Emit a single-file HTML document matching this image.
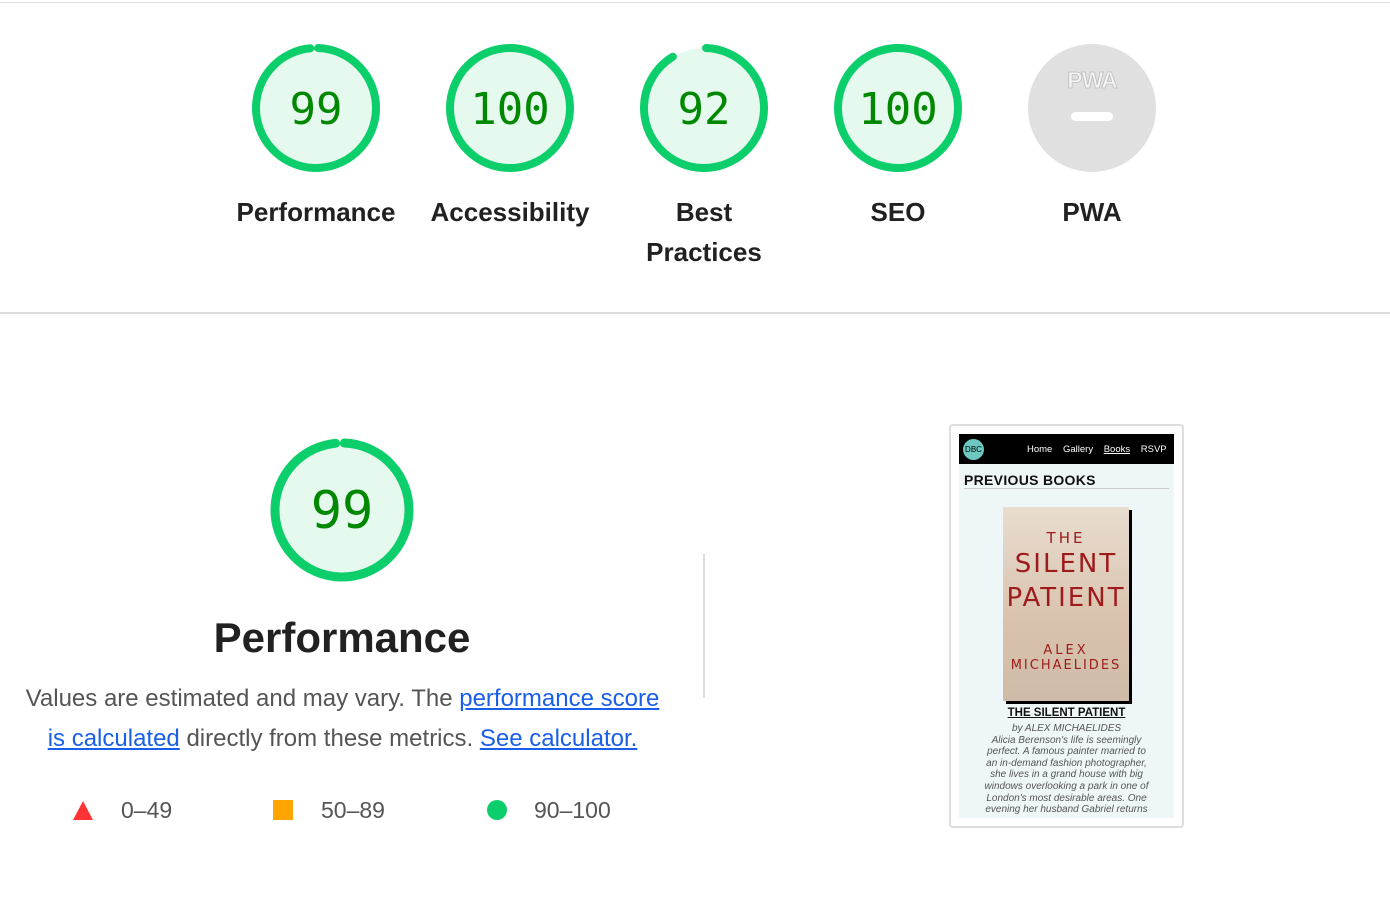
<!DOCTYPE html><html><head><style>
body{margin:0;width:1390px;height:906px;background:#fff;font-family:"Liberation Sans",sans-serif;position:relative;overflow:hidden}
.a{position:absolute}
.lbl{position:absolute;width:200px;text-align:center;font-size:26px;font-weight:bold;color:#212121;line-height:40px}
a{color:#1a5fe8;text-decoration:underline}
</style></head><body>
<div class="a" style="left:0;top:2px;width:1390px;height:1px;background:#ddd"></div>
<div class="a" style="left:0;top:312px;width:1390px;height:2px;background:#ddd"></div>
<svg class="a" style="left:0;top:0" width="1390" height="320">
<g fill="#e5f9ef" stroke="#0cce6b" stroke-width="8" stroke-linecap="round">
<circle cx="316" cy="108" r="60" stroke-dasharray="369 377" transform="rotate(-88 316 108)"/>
<circle cx="510" cy="108" r="60"/>
<circle cx="704" cy="108" r="60" stroke-dasharray="342 377" transform="rotate(-88 704 108)"/>
<circle cx="898" cy="108" r="60"/>
</g>
<circle cx="1092" cy="108" r="64" fill="#e0e0e0"/>
<rect x="1071" y="112" width="42" height="9" rx="4.5" fill="#fff"/>
<text x="1092" y="88" text-anchor="middle" font-family="Liberation Sans" font-weight="bold" font-size="23" fill="#f4f4f4" stroke="#bbb" stroke-width="0.8" letter-spacing="-1">PWA</text>
<g font-family="DejaVu Sans Mono" font-size="44" fill="#008800" text-anchor="middle">
<text x="316" y="124">99</text><text x="510" y="124">100</text><text x="704" y="124">92</text><text x="898" y="124">100</text>
</g>
</svg>
<div class="lbl" style="left:216px;top:192px">Performance</div>
<div class="lbl" style="left:410px;top:192px">Accessibility</div>
<div class="lbl" style="left:604px;top:192px">Best<br>Practices</div>
<div class="lbl" style="left:798px;top:192px">SEO</div>
<div class="lbl" style="left:992px;top:192px">PWA</div>
<svg class="a" style="left:260px;top:430px" width="170" height="170">
<circle cx="82" cy="80" r="67" fill="#e5f9ef" stroke="#0cce6b" stroke-width="9" stroke-dasharray="412 421" transform="rotate(-88 82 80)" stroke-linecap="round"/>
<text x="82" y="98" text-anchor="middle" font-family="DejaVu Sans Mono" font-size="52" fill="#008800">99</text>
</svg>
<div class="a" style="left:92px;top:610px;width:500px;text-align:center;font-size:42px;font-weight:bold;color:#212121;line-height:56px">Performance</div>
<div class="a" style="left:20px;top:679px;width:645px;text-align:center;font-size:24px;line-height:40px;color:#555">Values are estimated and may vary. The <a>performance score is calculated</a> directly from these metrics. <a>See calculator.</a></div>
<svg class="a" style="left:72px;top:800px" width="22" height="22"><polygon points="11,1 21,20 1,20" fill="#f33"/></svg>
<div class="a" style="left:121px;top:797px;font-size:23px;color:#555">0–49</div>
<div class="a" style="left:273px;top:800px;width:20px;height:20px;background:#ffa400"></div>
<div class="a" style="left:321px;top:797px;font-size:23px;color:#555">50–89</div>
<div class="a" style="left:487px;top:800px;width:20px;height:20px;border-radius:50%;background:#0cce6b"></div>
<div class="a" style="left:534px;top:797px;font-size:23px;color:#555">90–100</div>
<div class="a" style="left:703px;top:554px;width:2px;height:144px;background:#ddd"></div>
<div class="a" style="left:949px;top:424px;width:231px;height:400px;border:2px solid #ddd;border-radius:4px;background:#fff"></div>
<div class="a" style="left:959px;top:434px;width:215px;height:384px;background:#eef6f8;overflow:hidden">
<div style="height:30px;background:#000;position:relative">
<div class="a" style="left:4px;top:5px;width:21px;height:21px;border-radius:50%;background:#6cc8c0;font-size:8px;line-height:21px;text-align:center">DBC</div>
<div class="a" style="left:68px;top:10px;font-size:9.5px;color:#fff;word-spacing:8px">Home Gallery <u>Books</u> RSVP</div>
</div>
<div style="margin:8px 5px 0;border-bottom:1px solid #ccc;font-size:14px;font-weight:bold;letter-spacing:.3px;color:#111">PREVIOUS BOOKS</div>
<div class="a" style="left:47px;top:76px;width:126px;height:194px;background:#000"></div>
<div class="a" style="left:44px;top:73px;width:126px;height:194px;background:linear-gradient(#e8ddd0,#d9c2ad 60%,#cdbca8);color:#9e1b1b;text-align:center;font-family:'DejaVu Sans',sans-serif">
<div style="font-size:15px;margin-top:22px;letter-spacing:3px">THE</div>
<div style="font-size:26px;letter-spacing:2px;line-height:34px">SILENT<br>PATIENT</div>
<div style="font-size:13px;margin-top:28px;letter-spacing:3px">ALEX</div>
<div style="font-size:13px;letter-spacing:2px">MICHAELIDES</div></div>
<div class="a" style="left:0;top:273px;width:215px;text-align:center;font-size:11.5px;font-weight:bold;color:#111"><u>THE SILENT PATIENT</u></div>
<div class="a" style="left:0;top:289px;width:215px;text-align:center;font-size:10px;font-style:italic;color:#555;line-height:11.6px">by ALEX MICHAELIDES<br>Alicia Berenson's life is seemingly<br>perfect. A famous painter married to<br>an in-demand fashion photographer,<br>she lives in a grand house with big<br>windows overlooking a park in one of<br>London's most desirable areas. One<br>evening her husband Gabriel returns</div>
</div>
</body></html>
